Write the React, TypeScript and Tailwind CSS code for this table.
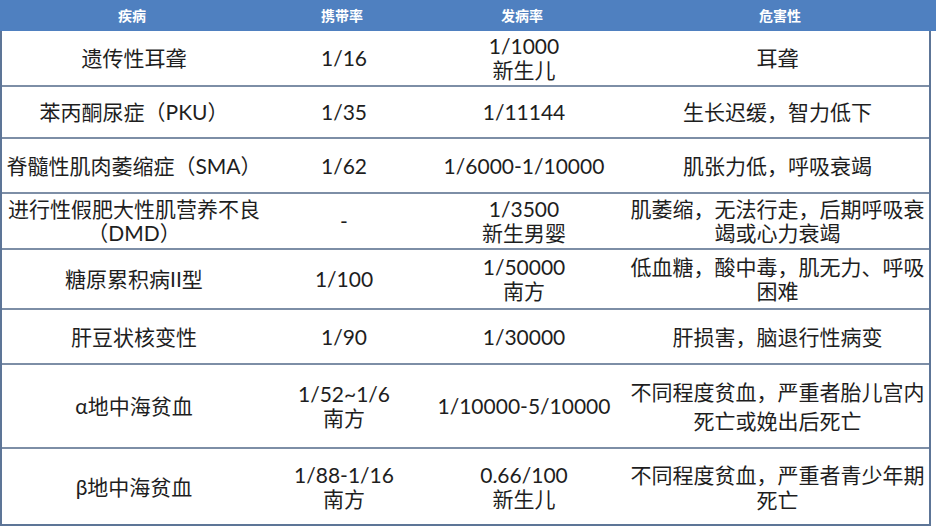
const rows: { cells: string[][]; h: string; lead?: string }[] = [
  { cells: [["遗传性耳聋"], ["1/16"], ["1/1000", "新生儿"], ["耳聋"]], h: "h-[54px]" },
  { cells: [["苯丙酮尿症（PKU）"], ["1/35"], ["1/11144"], ["生长迟缓，智力低下"]], h: "h-[52px]" },
  { cells: [["脊髓性肌肉萎缩症（SMA）"], ["1/62"], ["1/6000-1/10000"], ["肌张力低，呼吸衰竭"]], h: "h-[55px]" },
  {
    cells: [["进行性假肥大性肌营养不良", "（DMD）"], ["-"], ["1/3500", "新生男婴"], ["肌萎缩，无法行走，后期呼吸衰", "竭或心力衰竭"]],
    h: "h-[56px]",
  },
  { cells: [["糖原累积病II型"], ["1/100"], ["1/50000", "南方"], ["低血糖，酸中毒，肌无力、呼吸", "困难"]], h: "h-[60px]" },
  { cells: [["肝豆状核变性"], ["1/90"], ["1/30000"], ["肝损害，脑退行性病变"]], h: "h-[55px]" },
  {
    cells: [["α地中海贫血"], ["1/52~1/6", "南方"], ["1/10000-5/10000"], ["不同程度贫血，严重者胎儿宫内", "死亡或娩出后死亡"]],
    h: "h-[84px]",
    lead: "leading-[29px]",
  },
  {
    cells: [["β地中海贫血"], ["1/88-1/16", "南方"], ["0.66/100", "新生儿"], ["不同程度贫血，严重者青少年期", "死亡"]],
    h: "h-[77px]",
    lead: "leading-[25px]",
  },
];

const widths = ["w-[264px]", "w-[156px]", "w-[204px]", "flex-1"];
const headers = ["疾病", "携带率", "发病率", "危害性"];

export default function App() {
  return (
    <div className="w-[936px] h-[528px] bg-white text-[#1e1e1e] font-['Lato','Noto_Sans_CJK_SC',sans-serif]">
      <div className="flex h-[31px] bg-[#4f80c0] text-white text-[14px] font-bold">
        {headers.map((t, i) => (
          <div key={t} className={`${widths[i]} flex items-center justify-center`}>
            {t}
          </div>
        ))}
      </div>
      <div className="w-[931px] border-x-2 border-b-2 border-[#5d7597]">
        {rows.map((r, ri) => (
          <div
            key={ri}
            className={`flex ${r.h} ${ri > 0 ? "border-t-2 border-[#7d8ea6]" : ""} text-[21px] leading-[24px]`}
          >
            {r.cells.map((c, ci) => (
              <div
                key={ci}
                className={`${widths[ci]} flex flex-col items-center justify-center text-center px-[4px] whitespace-nowrap ${
                  ci === 3 && r.lead ? r.lead : ""
                }`}
              >
                {c.map((line, li) => (
                  <div key={li}>{line}</div>
                ))}
              </div>
            ))}
          </div>
        ))}
      </div>
    </div>
  );
}
